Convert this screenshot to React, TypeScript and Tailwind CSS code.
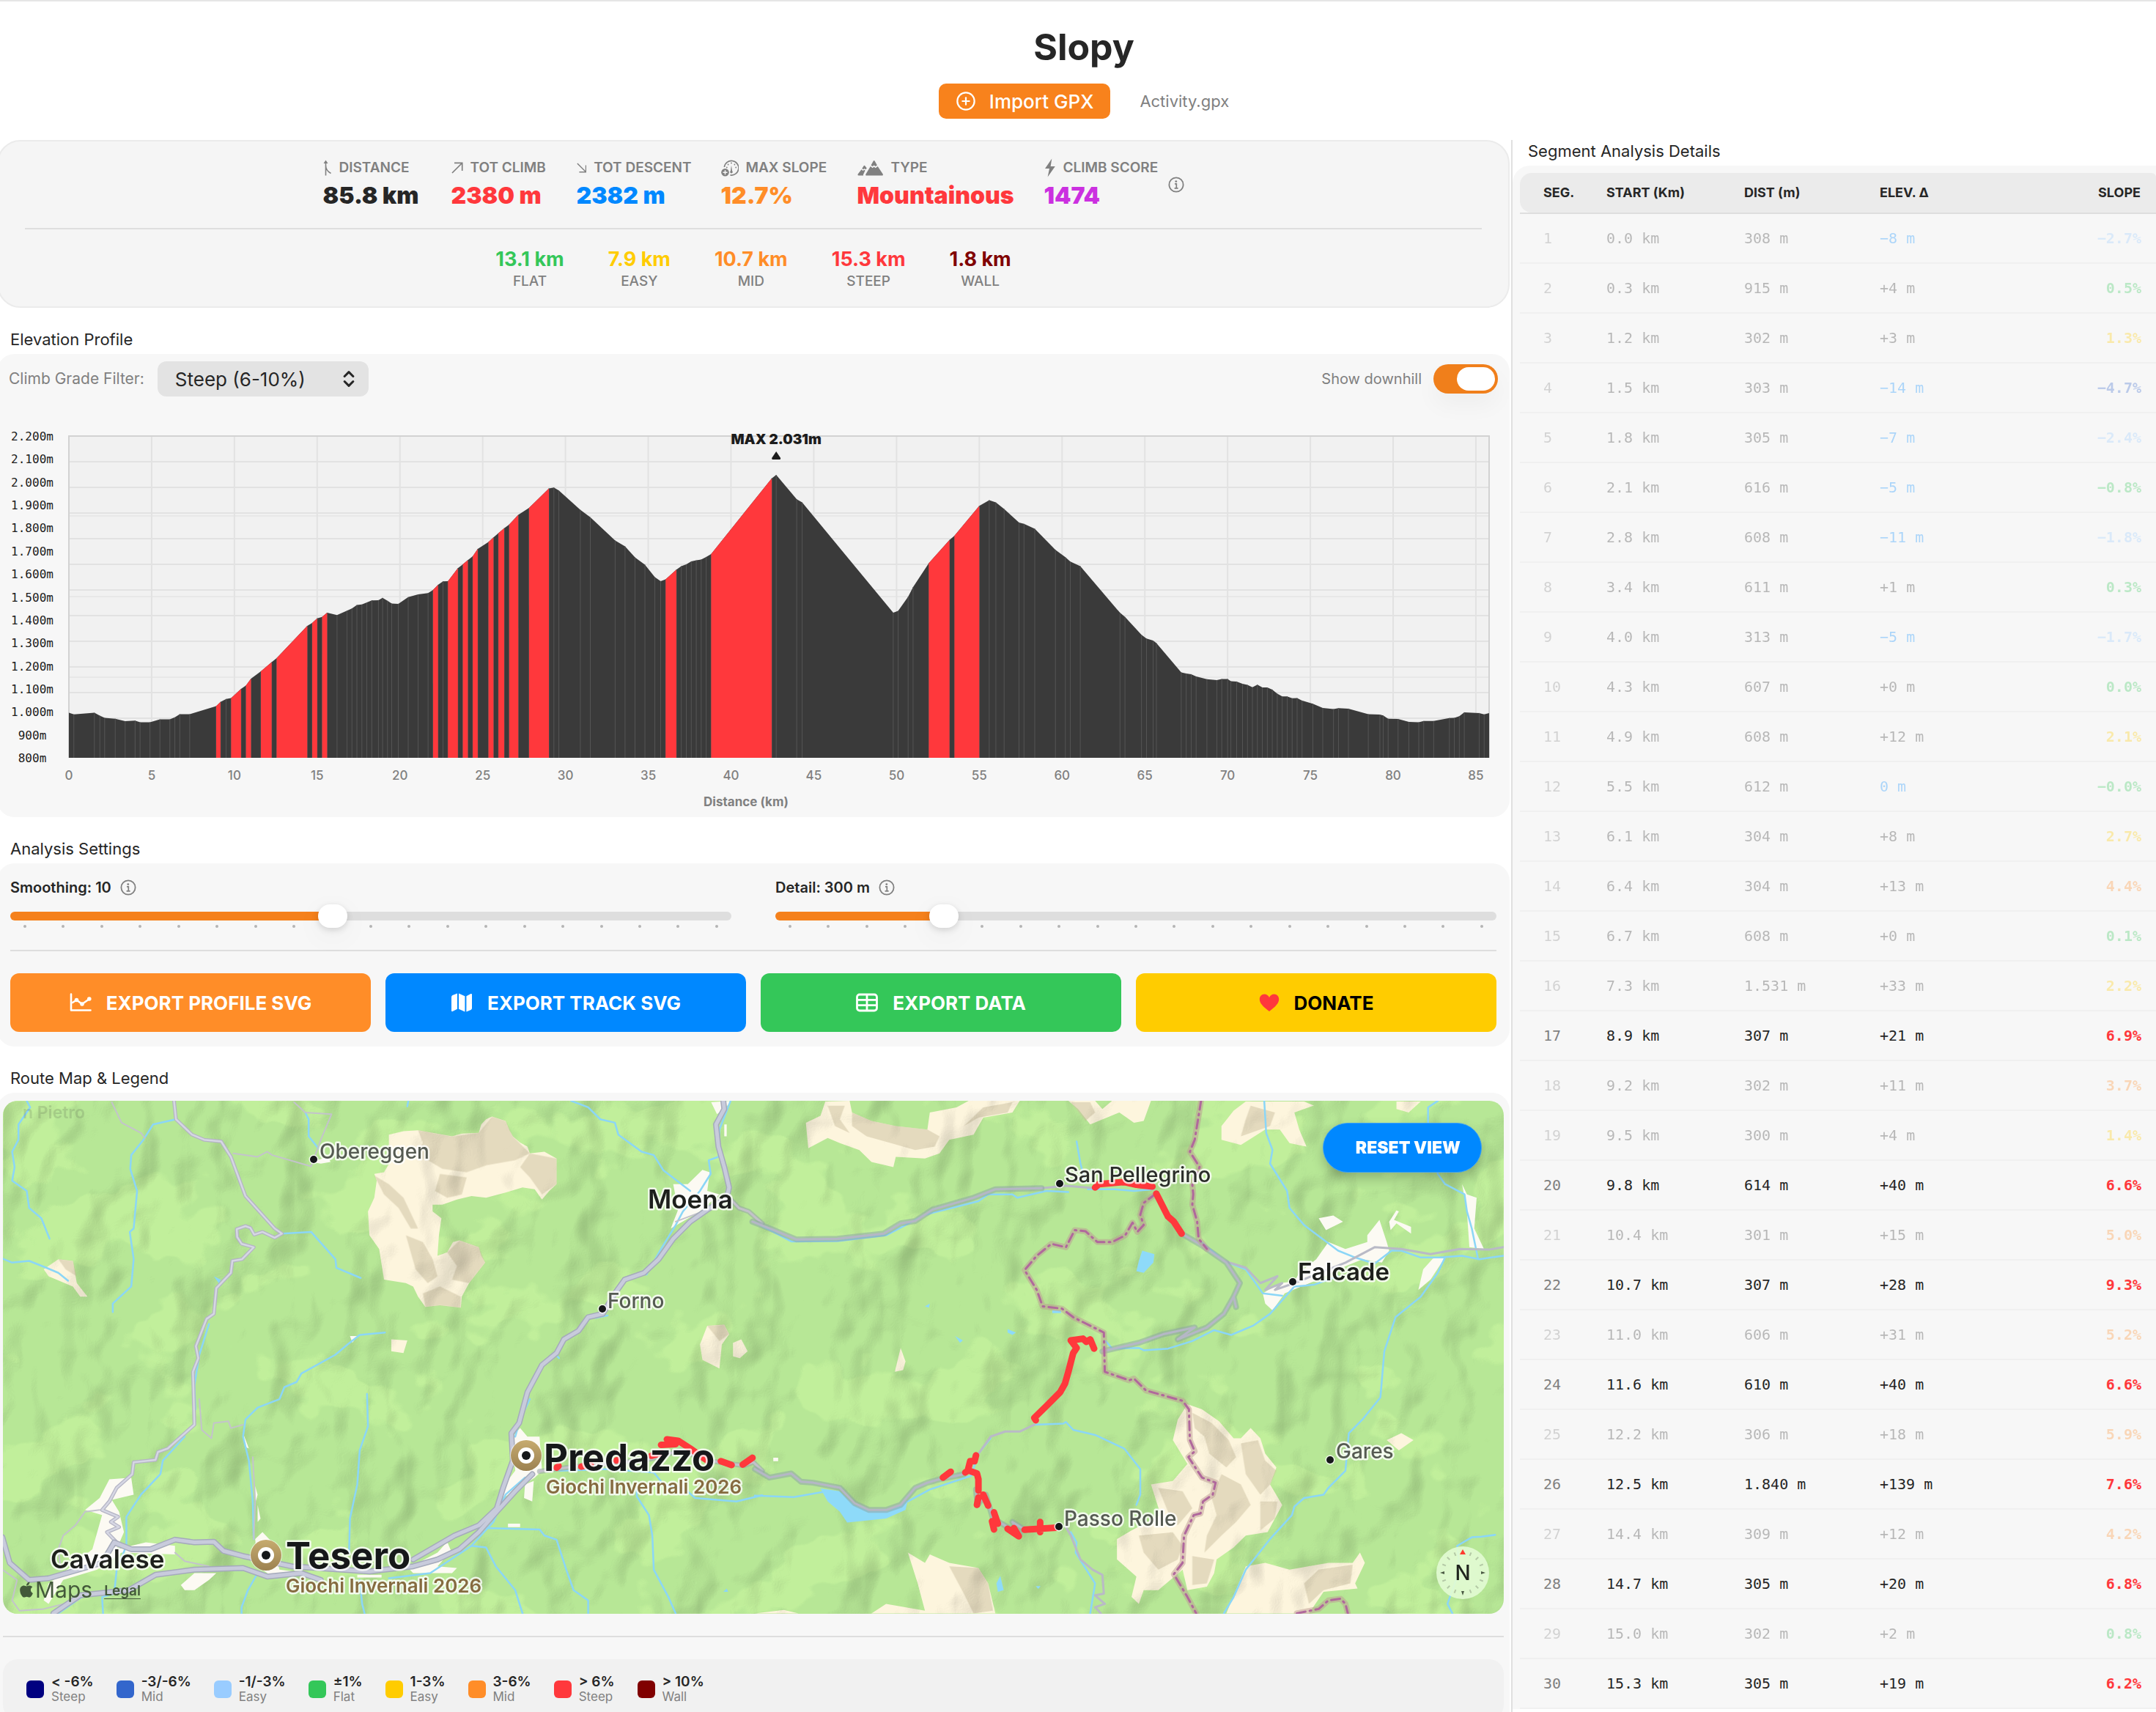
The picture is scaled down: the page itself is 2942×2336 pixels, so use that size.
import { useId, useState, type CSSProperties, type ReactNode } from "react";
import { ChevronsUpDown, CirclePlus } from "lucide-react";
import { FaApple } from "react-icons/fa";

const SANS = "font-[Inter,'Open_Sans',sans-serif]";

/* ---------- icons ---------- */

function InfoIcon() {
  return (
    <svg viewBox="0 0 22 22" className="size-[22px]" fill="none" stroke="currentColor" aria-hidden>
      <circle cx="11" cy="11" r="9.6" strokeWidth="1.8" />
      <circle cx="10.8" cy="6.6" r="1.4" fill="currentColor" stroke="none" />
      <path d="M9 9.8h2.3v6M8.6 15.8h5" strokeWidth="1.7" />
    </svg>
  );
}

function DistanceIcon() {
  return (
    <svg viewBox="0 0 12 22" className="h-[22px] w-3" fill="none" stroke="currentColor" strokeWidth="1.6" aria-hidden>
      <path d="M3.5 21.5V3M3.5 8c0 5 2.500 8 7 10.500" />
      <path d="M3.500 0.500 0.500 5h6z" fill="currentColor" stroke="none" />
    </svg>
  );
}

function UpRightIcon() {
  return (
    <svg viewBox="0 0 16 16" className="size-4" fill="none" stroke="currentColor" strokeWidth="1.7" aria-hidden>
      <path d="M1 15 14.500 1.500M4 1.300h10.700V12" />
    </svg>
  );
}

function DownRightIcon() {
  return (
    <svg viewBox="0 0 16 16" className="size-4" fill="none" stroke="currentColor" strokeWidth="1.7" aria-hidden>
      <path d="M1 1 14.500 14.500M4 14.700h10.700V4" />
    </svg>
  );
}

function GaugeIcon() {
  return (
    <svg viewBox="0 0 24 24" className="size-6" fill="none" stroke="currentColor" aria-hidden>
      <path d="M4.400 11A9.800 9.800 0 1 1 12.500 21.900" strokeWidth="1.700" />
      <path d="M14 8.500l1.300 9.500h-2.600z" fill="currentColor" stroke="none" />
      <circle cx="14" cy="17.700" r="1.700" fill="currentColor" stroke="none" />
      <path d="M14 5.500v.1M9.600 7.400v.1M18.400 7.400v.1M7.800 11.500v.1M20.200 11.500v.1" strokeWidth="1.800" strokeLinecap="round" />
      <circle cx="5.500" cy="18.300" r="5.300" fill="currentColor" stroke="none" />
      <path d="M5.500 15.300v6M2.500 18.300h6" stroke="#f5f5f5" strokeWidth="1.500" />
    </svg>
  );
}

function MountainsIcon() {
  return (
    <svg viewBox="0 0 36 22" className="h-[22px] w-9" fill="currentColor" aria-hidden>
      <path d="M18.500 7.500 21.700 1.700q1-1.500 2 0l3.200 5.800-2.200 1.600-2-1.500-2 1.500z" />
      <path d="M17.800 9l2.800 2.200 2-1.500 2.200 1.500L27.700 9l7 10.500q.8 2-1.200 2H12.500q-2 0-1-2z" />
      <path d="M6.300 12 8.500 8.500q1-1.400 2 0l2.300 3-1.600 1.700-1.700-1.200-1.500 1.200z" />
      <path d="M5.500 13.300l2 1.600 1.800-1.200 1.300.9-2.400 5.100q-.5 1 0 1.800H1.800q-2-.3-1.100-2z" />
    </svg>
  );
}

function BoltIcon() {
  return (
    <svg viewBox="0 0 16 26" className="h-[26px] w-4" fill="currentColor" aria-hidden>
      <path d="M10.300.6 1 14h6L4.600 25.400 14.800 11H8.600z" />
    </svg>
  );
}

function ChartIcon() {
  return (
    <svg viewBox="0 0 30 26" className="h-[26px] w-[30px]" fill="none" stroke="currentColor" strokeWidth="2.600" strokeLinecap="round" strokeLinejoin="round" aria-hidden>
      <path d="M2 1.500V23.500H28.500" />
      <path d="M4 13 9.500 9.500 17 15 27 8" />
      <circle cx="9.500" cy="9.500" r="1.500" fill="currentColor" />
      <circle cx="17" cy="15" r="1.500" fill="currentColor" />
      <circle cx="26.800" cy="8" r="1.500" fill="currentColor" />
    </svg>
  );
}

function FoldedMapIcon() {
  return (
    <svg viewBox="0 0 30 26" className="h-[26px] w-[30px]" fill="currentColor" aria-hidden>
      <path d="M1 5.500Q1 3.800 2.500 3L9 .6V21.800L2.600 25Q1 25.500 1 24z" />
      <path d="M11 .6 19.400 4.200V25.400L11 21.800z" />
      <path d="M21.400 4.200 27.400 1Q29 .5 29 2V20.500Q29 22.200 27.500 23L21.400 25.400z" />
    </svg>
  );
}

function TableIcon() {
  return (
    <svg viewBox="0 0 30 26" className="h-[26px] w-[30px]" fill="none" stroke="currentColor" strokeWidth="2.800" aria-hidden>
      <rect x="1.500" y="2" width="27" height="22" rx="3.500" />
      <path d="M1.500 9.300h27M1.500 16.600h27M15 2v22" />
    </svg>
  );
}

function HeartIcon() {
  return (
    <svg viewBox="0 0 28 24" className="h-6 w-7 text-[#ff383c]" fill="currentColor" aria-hidden>
      <path d="M14 24C5 17.500.8 12.500.8 7.600.8 3.600 3.600.6 7.300.6c2.900 0 5.300 1.600 6.700 4.300C15.400 2.200 17.800.6 20.700.6c3.700 0 6.500 3 6.500 7C27.200 12.500 23 17.500 14 24z" />
    </svg>
  );
}

/* ---------- summary ---------- */

const STATS = [
  { label: "DISTANCE", value: "85.8 km", icon: <DistanceIcon />, width: "w-[135px]", color: "text-[#262626]" },
  { label: "TOT CLIMB", value: "2380 m", icon: <UpRightIcon />, width: "w-[131px]", color: "text-[#ff383c]" },
  { label: "TOT DESCENT", value: "2382 m", icon: <DownRightIcon />, width: "w-[157px]", color: "text-[#0088ff]" },
  { label: "MAX SLOPE", value: "12.7%", icon: <GaugeIcon />, width: "w-[146px]", color: "text-[#ff8d28]" },
  { label: "TYPE", value: "Mountainous", icon: <MountainsIcon />, width: "w-[215px]", color: "text-[#ff383c]" },
  { label: "CLIMB SCORE", value: "1474", icon: <BoltIcon />, width: "w-[159px]", color: "text-[#cb30e0]" },
];

const GRADES = [
  { label: "FLAT", value: "13.1 km", color: "text-[#34c759]" },
  { label: "EASY", value: "7.9 km", color: "text-[#ffcc00]" },
  { label: "MID", value: "10.7 km", color: "text-[#ff8d28]" },
  { label: "STEEP", value: "15.3 km", color: "text-[#ff383c]" },
  { label: "WALL", value: "1.8 km", color: "text-[#800000]" },
];

function Summary() {
  return (
    <section className="rounded-[32px] border-2 border-[#ebebeb] bg-[#f5f5f5] px-9 py-6">
      <div className="flex items-center justify-center gap-[10px]">
        <div className="flex gap-10">
          {STATS.map((s) => (
            <div key={s.label} className={`${s.width} whitespace-nowrap`}>
              <div className="flex h-6 items-center gap-[10px] text-[19px] font-semibold text-[#808080]">
                {s.icon}
                {s.label}
              </div>
              <div className={`mt-[6px] text-[32px] leading-10 font-black ${s.color}`}>{s.value}</div>
            </div>
          ))}
        </div>
        <button type="button" aria-label="About the climb score" className="text-[#808080]">
          <InfoIcon />
        </button>
      </div>
      <div className="mt-6 h-[2px] bg-[#dedede]" />
      <div className="mt-[25px] flex justify-center gap-[60px]">
        {GRADES.map((g) => (
          <div key={g.label} className="text-center">
            <div className={`text-[27px] leading-8 font-bold ${g.color}`}>{g.value}</div>
            <div className="mt-1 text-[19px] leading-5 font-medium text-[#808080]">{g.label}</div>
          </div>
        ))}
      </div>
    </section>
  );
}

function SectionTitle({ children }: { children: ReactNode }) {
  return <h2 className="mt-[29px] mb-[6px] pl-[18px] text-[22px] leading-7 text-[#262626]">{children}</h2>;
}

/* ---------- elevation profile ---------- */

const PROFILE: [number, number][] = [
  [0, 996], [0.3, 989], [1.54, 996], [1.87, 983], [2.16, 974], [2.8, 970], [3.4, 959], [4, 962], [4.3, 955], [4.9, 955],
  [5.5, 967], [6.1, 967], [6.4, 976], [6.7, 990], [7.3, 990], [8.9, 1025], [9.16, 1043], [9.5, 1056], [9.8, 1060],
  [10.4, 1100], [10.7, 1115], [11, 1144], [11.6, 1176], [12.25, 1216], [12.55, 1234], [14.4, 1374], [14.7, 1387],
  [15, 1407], [15.3, 1413], [15.6, 1431], [16.2, 1421], [16.8, 1440], [17.1, 1450], [17.4, 1465], [17.7, 1467],
  [18, 1476], [18.3, 1485], [18.7, 1486], [18.95, 1496], [19.25, 1483], [19.5, 1471], [19.9, 1470], [20.5, 1499],
  [21.1, 1511], [21.7, 1517], [22, 1530], [22.3, 1553], [22.6, 1568], [22.9, 1569], [23.5, 1625], [23.8, 1642],
  [24.1, 1660], [24.4, 1677], [24.7, 1709], [25.35, 1739], [25.65, 1759], [25.95, 1777], [26.3, 1799], [26.6, 1815],
  [27.15, 1857], [27.8, 1887], [29, 1972], [29.3, 1976], [29.6, 1963], [30.9, 1879], [31.5, 1847], [33, 1746],
  [33.6, 1720], [34.2, 1672], [34.8, 1640], [35.4, 1586], [35.75, 1569], [36.05, 1577], [36.7, 1619], [37, 1634],
  [37.3, 1642], [37.6, 1655], [37.9, 1659], [38.2, 1663], [38.5, 1674], [38.8, 1687], [42.46, 2016], [42.73, 2031],
  [43.97, 1925], [44.3, 1911], [49.8, 1431], [50.1, 1439], [50.7, 1501], [51, 1543], [51.95, 1647], [53.2, 1748],
  [53.5, 1766], [55, 1896], [55.6, 1921], [56, 1911], [56.5, 1883], [57.4, 1824], [57.7, 1818], [58.35, 1797],
  [59.6, 1705], [60.2, 1673], [60.5, 1654], [61.1, 1634], [63.5, 1431], [63.8, 1413], [64.8, 1335], [65.1, 1319],
  [65.5, 1310], [65.7, 1299], [67.2, 1172], [67.5, 1167], [67.8, 1164], [68.1, 1154], [68.75, 1142], [69.35, 1138],
  [69.65, 1143], [70, 1143], [70.2, 1133], [70.55, 1132], [70.9, 1122], [71.2, 1117], [71.5, 1107], [71.8, 1118],
  [72.1, 1106], [72.4, 1106], [72.7, 1097], [73, 1079], [73.3, 1067], [73.6, 1067], [73.9, 1059], [74.2, 1060],
  [74.5, 1049], [75.15, 1035], [75.75, 1017], [76.4, 1012], [76.7, 1016], [77.3, 1014], [78.5, 990], [79.2, 988],
  [79.4, 984], [79.7, 970], [80.3, 969], [80.95, 956], [81.55, 955], [81.85, 960], [82.45, 960], [83.4, 973],
  [83.7, 974], [84, 981], [84.3, 998], [85.2, 995], [85.5, 989], [85.8, 995],
];

const STEEP: [number, number][] = [
  [8.9, 9.16], [9.8, 10.4], [10.7, 11], [11.6, 12.25], [12.55, 14.4], [14.7, 15], [15.3, 15.6], [22, 22.3],
  [22.9, 23.5], [23.8, 24.1], [24.4, 24.7], [25.35, 25.65], [25.95, 26.3], [26.6, 27.15], [27.8, 29], [36.05, 36.7],
  [38.8, 42.46], [51.95, 53.2], [53.5, 55],
];

const LEFT = 98;
const RIGHT = 2036;
const TOP = 54;
const BOTTOM = 493;
const kmX = (km: number) => LEFT + (km / 85.8) * (RIGHT - LEFT);
const elevY = (m: number) => BOTTOM - ((m - 800) / 1400) * (BOTTOM - TOP);

function area(points: [number, number][]) {
  const line = points.map(([km, m]) => `${kmX(km).toFixed(1)},${elevY(m).toFixed(1)}`).join(" ");
  return `${kmX(points[0][0])},${BOTTOM} ${line} ${kmX(points[points.length - 1][0])},${BOTTOM}`;
}

const thousands = (n: number) => (n >= 1000 ? `${Math.floor(n / 1000)}.${String(n % 1000).padStart(3, "0")}` : String(n));

function ElevationChart() {
  const elevations = Array.from({ length: 15 }, (_, i) => 2200 - i * 100);
  const distances = Array.from({ length: 18 }, (_, i) => i * 5);
  const peak = kmX(42.73);
  return (
    <svg viewBox="0 0 2064 574" className="block h-auto w-full" role="img" aria-label="Elevation profile">
      <rect x={LEFT} y={TOP} width={RIGHT - LEFT} height={BOTTOM - TOP} fill="#f1f1f1" />
      <g stroke="#dcdcdc" strokeWidth="1.500">
        {Array.from({ length: 12 }, (_, i) => (
          <path key={i} d={`M${LEFT} ${TOP + 35 * (i + 1)}H${RIGHT}`} />
        ))}
      </g>
      <g stroke="#e4e4e4" strokeWidth="1.500">
        {[163, 273, 383].map((y) => (
          <path key={y} d={`M${LEFT} ${y}H${RIGHT}`} />
        ))}
      </g>
      <g stroke="#e2e2e2" strokeWidth="2">
        {distances.map((km) => (
          <path key={km} d={`M${kmX(km)} ${TOP}V${BOTTOM}`} />
        ))}
      </g>
      <path d={`M${LEFT} ${BOTTOM}V${TOP}H${RIGHT}V${BOTTOM}`} fill="none" stroke="#d2d2d2" strokeWidth="2" />
      <polygon points={area(PROFILE)} fill="#3a3a3a" />
      {PROFILE.slice(1, -1).map(([km, m]) => (
        <path key={km} d={`M${kmX(km)} ${elevY(m)}V${BOTTOM}`} stroke="#555555" strokeWidth="1" />
      ))}
      {STEEP.map(([a, b]) => (
        <polygon key={a} points={area(PROFILE.filter(([km]) => km >= a && km <= b))} fill="#ff383c" />
      ))}
      <g className="font-['DejaVu_Sans_Mono',monospace] text-[16px]" fill="#1c1c1c" textAnchor="middle">
        {elevations.map((m, i) => (
          <text key={m} x="48" y={TOP + 6 + (i * (BOTTOM - TOP)) / 14}>
            {thousands(m)}m
          </text>
        ))}
      </g>
      <g className="text-[17px] font-medium" fill="#808080" textAnchor="middle">
        {distances.map((km) => (
          <text key={km} x={kmX(km)} y="523">
            {km}
          </text>
        ))}
        <text x="1022" y="559" className="font-bold">
          Distance (km)
        </text>
      </g>
      <text x={peak} y="65" textAnchor="middle" fill="#1c1c1c" className="text-[19px] font-black">
        MAX 2.031m
      </text>
      <path d={`M${peak} 75l6 9q0 2-1 2h-10q-1 0-1-2z`} fill="#1c1c1c" />
    </svg>
  );
}

function ElevationCard() {
  const [downhill, setDownhill] = useState(true);
  return (
    <section className="overflow-hidden rounded-[24px] bg-[#f7f7f7] pt-[10px]">
      <div className="flex h-12 items-center pr-4 pl-4 text-[#808080]">
        <label htmlFor="grade" className="mr-[18px] text-[21px]">
          Climb Grade Filter:
        </label>
        <div className="relative">
          <select
            id="grade"
            defaultValue="steep"
            className="h-12 w-[288px] appearance-none rounded-xl bg-[#e3e3e3] pl-6 text-[26px] text-[#262626]"
          >
            <option value="easy">Easy (1-3%)</option>
            <option value="mid">Mid (3-6%)</option>
            <option value="steep">Steep (6-10%)</option>
            <option value="wall">Wall (&gt;10%)</option>
          </select>
          <ChevronsUpDown className="pointer-events-none absolute top-[10px] right-[13px] size-7 text-[#262626]" strokeWidth={2.600} />
        </div>
        <label htmlFor="downhill" className="mr-4 ml-auto text-[20px]">
          Show downhill
        </label>
        <input
          id="downhill"
          type="checkbox"
          role="switch"
          checked={downhill}
          onChange={(e) => setDownhill(e.target.checked)}
          className="h-10 w-[88px] appearance-none rounded-full bg-[#d1d1d1] p-1 shadow-[0_16px_32px_rgba(0,0,0,0.04)] before:block before:h-8 before:w-[52px] before:rounded-full before:bg-white checked:bg-[#f07f1b] checked:before:ml-7"
        />
      </div>
      <ElevationChart />
    </section>
  );
}

/* ---------- settings ---------- */

function Slider(props: { name: string; unit: string; min: number; max: number; step: number; initial: number }) {
  const { name, unit, min, max, step, initial } = props;
  const id = useId();
  const [value, setValue] = useState(initial);
  const fill = { "--fill": `${((value - min) / (max - min)) * 100}%` } as CSSProperties;
  return (
    <div>
      <div className="flex h-6 items-center gap-3 text-[20px] font-semibold text-[#262626]">
        <label htmlFor={id}>
          {name}: {value}
          {unit}
        </label>
        <button type="button" aria-label={`About ${name}`} className="text-[#808080]">
          <InfoIcon />
        </button>
      </div>
      <input
        id={id}
        type="range"
        min={min}
        max={max}
        step={step}
        value={value}
        onChange={(e) => setValue(Number(e.target.value))}
        style={fill}
        className="relative z-10 mt-[11px] block h-8 w-full appearance-none bg-transparent [&::-webkit-slider-runnable-track]:h-3 [&::-webkit-slider-runnable-track]:rounded-md [&::-webkit-slider-runnable-track]:bg-[linear-gradient(to_right,#f5811c_var(--fill),#dedede_var(--fill))] [&::-webkit-slider-thumb]:-mt-[10px] [&::-webkit-slider-thumb]:h-8 [&::-webkit-slider-thumb]:w-10 [&::-webkit-slider-thumb]:appearance-none [&::-webkit-slider-thumb]:rounded-2xl [&::-webkit-slider-thumb]:bg-white [&::-webkit-slider-thumb]:shadow-[0_3px_10px_rgba(0,0,0,0.14),0_10px_40px_rgba(0,0,0,0.05)]"
      />
      <div className="-mt-1 flex justify-between px-[18px]">
        {Array.from({ length: 19 }, (_, i) => (
          <span key={i} className="size-1 rounded-full bg-[#b4b4b4]" />
        ))}
      </div>
    </div>
  );
}

function ActionButton({ color, icon, children }: { color: string; icon: ReactNode; children: ReactNode }) {
  return (
    <button type="button" className={`flex h-20 items-center justify-center gap-5 rounded-xl text-[26px] font-bold ${color}`}>
      {icon}
      {children}
    </button>
  );
}

function SettingsCard() {
  return (
    <section className="rounded-[24px] bg-[#f7f7f7] px-[18px] pt-[21px] pb-5">
      <div className="grid grid-cols-2 gap-[60px]">
        <Slider name="Smoothing" unit="" min={2} max={20} step={1} initial={10} />
        <Slider name="Detail" unit=" m" min={100} max={1000} step={50} initial={300} />
      </div>
      <div className="my-[30px] h-[2px] bg-[#dedede]" />
      <div className="grid grid-cols-4 gap-5">
        <ActionButton color="bg-[#ff8d28] text-white" icon={<ChartIcon />}>EXPORT PROFILE SVG</ActionButton>
        <ActionButton color="bg-[#0088ff] text-white" icon={<FoldedMapIcon />}>EXPORT TRACK SVG</ActionButton>
        <ActionButton color="bg-[#34c759] text-white" icon={<TableIcon />}>EXPORT DATA</ActionButton>
        <ActionButton color="bg-[#ffcc00] text-black" icon={<HeartIcon />}>DONATE</ActionButton>
      </div>
    </section>
  );
}

/* ---------- map ---------- */

const WEST = "matrix(.6633 0 0 .4656 -4 -12)";
const EAST = "matrix(.6633 0 0 .4656 1026 -12)";
const KEEP = "[&_path]:[vector-effect:non-scaling-stroke]";

const LAND = {
  rockWest:
    "M800,125L830,115 860,112 890,120 930,130 950,122 985,120 990,95 1000,80 1012,72 1040,85 1048,112 1055,130 1070,148 1085,160 1090,180 1120,175 1145,195 1145,270 1130,290 1115,315 1100,285 1075,280 1040,295 1000,310 970,305 940,315 910,330 890,330 890,350 908,370 903,420 900,480 920,470 932,440 945,435 985,455 990,480 998,500 965,560 950,600 948,632 905,625 875,630 860,600 850,570 835,560 790,550 780,460 760,420 757,350 770,310 775,260 770,240 790,235 805,200 800,170Z" +
    "M90,520L120,490 150,495 158,560 180,600 165,600 150,570 100,540Z" +
    "M1440,740L1455,685 1490,682 1500,710 1485,740 1480,810 1445,785ZM1508,735L1525,725 1538,760 1522,780 1508,775ZM805,725L838,728 830,765 805,760Z",
  rockEast:
    "M105,90L135,70 145,28 195,26 200,60 240,85 290,100 355,110 360,60 415,45 440,26 545,26 530,60 470,75 450,125 400,140 380,180 350,195 290,190 285,220 240,205 215,170 175,150 150,135 110,165Z" +
    "M645,26L700,26 715,50 735,26 815,26 800,85 780,90 750,60 690,95 665,50Z" +
    "M985,55L1010,28 1130,28 1150,40 1110,60 1120,110 1135,160 1100,150 1080,110 1050,110 1000,155 960,140 960,100ZM1320,28L1370,28 1345,60 1320,50Z" +
    "M870,960L890,915 920,930 955,965 985,1015 1000,1015 1020,985 1040,1015 1050,1060 1073,1100 1060,1150 1085,1210 1055,1290 1010,1300 985,1335 950,1370 945,1410 930,1450 890,1460 880,1400 830,1460 800,1460 790,1500 775,1480 785,1420 745,1370 745,1310 775,1285 835,1240 815,1150 860,1140 890,1090 860,1020Z" +
    "M970,1528L1010,1390 1050,1380 1100,1400 1180,1380 1230,1380 1245,1350 1255,1380 1235,1440 1240,1455 1170,1465 1140,1528Z" +
    "M315,1350L350,1380 360,1355 400,1380 460,1395 480,1440 495,1528 240,1528 270,1500 350,1520 335,1440Z" +
    "M0,1528L60,1518 90,1528ZM288,820L300,750 310,790 305,815ZM1300,1020L1330,1000 1355,1020 1325,1050Z",
  shadeWest:
    "M860,112L930,130 985,120 1012,72 1040,85 1055,130 1090,180 1060,200 1000,215 960,235 910,225 880,200 850,190 870,150ZM1090,180L1145,195 1145,270 1115,300 1090,250 1070,220ZM770,245L800,270 830,310 850,370 860,400 845,400 820,340 790,300ZM835,420L870,440 890,490 900,540 880,560 855,520ZM920,470L945,435 985,455 998,500 965,560 930,550 940,510ZM870,590L905,570 948,600 948,632 905,625 875,630ZM905,240L960,250 950,300 920,310 895,290ZM1455,685L1490,682 1500,710 1480,730ZM120,490L150,495 158,540 135,520Z",
  shadeEast:
    "M200,60L240,85 290,100 355,110 380,130 370,160 330,170 280,150 230,130 200,100ZM150,40L185,40 175,80 195,120 165,100ZM470,45L530,30 520,60 460,75 430,100ZM650,30L690,30 700,60 680,85ZM1020,40L1070,60 1060,100 1000,130 1010,80ZM900,940L940,970 975,1020 990,1070 970,1100 935,1060 925,1010 905,985ZM1000,1030L1035,1020 1050,1080 1073,1110 1060,1150 1040,1180 1010,1120ZM960,1120L1000,1150 1020,1210 990,1260 960,1300 925,1350 930,1300 950,1240 940,1190ZM830,1160L880,1170 900,1220 870,1270 850,1230ZM790,1300L860,1290 880,1330 870,1370 830,1400 800,1350ZM1040,1200L1075,1200 1070,1250 1040,1285ZM900,1360L945,1370 930,1440 900,1445ZM1160,1400L1230,1385 1225,1440 1170,1460 1140,1500 1130,1440ZM400,1390L460,1395 480,1440 490,1520 450,1528 430,1470Z",
  townWest:
    "M1385,270L1415,270 1445,228 1460,235 1455,290 1480,300 1440,350 1380,400 1395,345ZM1463,30L1505,26 1490,50 1475,65ZM1490,95h5v35h-5z" +
    "M1055,1010L1070,985 1085,1010 1110,1010 1115,1110 1100,1130 1035,1190 1038,1150 1060,1110ZM1080,1150L1098,1140 1095,1200 1078,1190ZM1045,1265h25v10h-25z" +
    "M225,1135L270,1130 275,1180 230,1195 245,1230 255,1290 240,1340 300,1320 360,1330 360,1355 250,1350 200,1400 130,1430 100,1500 90,1490 100,1440 120,1420 190,1340 210,1240 175,1225 205,1190Z" +
    "M372,1445L400,1410 445,1410 430,1430 400,1460 380,1460ZM525,1310L540,1290 560,1320 575,1400 620,1408 560,1420 530,1390ZM500,1000L512,1045 505,1040ZM525,1155L530,1180 525,1205ZM530,1210l6,40 -6,10z" +
    "M840,1395L900,1350 920,1318 928,1345 900,1390 940,1395 930,1410 850,1410ZM735,1415h50v8h-50zM640,205l35,-15 5,15 -20,5zM720,715l15,0 -10,20z",
  townEast:
    "M1045,590L1080,560 1110,555 1120,530 1155,490 1180,440 1215,460 1260,440 1260,420 1285,375 1300,440 1305,465 1290,500 1250,490 1200,520 1150,555 1090,590 1065,640 1050,620ZM1160,370L1190,362 1210,380 1175,405Z" +
    "M1305,380L1320,347 1325,350 1315,375 1350,395 1350,415 1320,385 1308,405ZM1455,270L1465,300 1485,310 1480,400 1500,460 1470,455 1465,350ZM1375,520L1395,488 1420,485 1390,550 1365,580ZM38,1072h10v10h-10z",
  lakes:
    "M135,1162L175,1170 205,1210 235,1228 275,1228 315,1195 310,1225 270,1250 190,1262 175,1230 150,1200ZM797,465L822,475 820,500 800,530 785,525 790,495ZM520,695L537,705 530,712 520,705ZM412,715L428,728 422,735ZM497,1440L505,1418 512,1460 500,1465ZM612,640h18v8h-18zM350,628l10,-8 -2,12zM578,1448l10,0 -5,8z",
  lakesWest: "M1488,1465L1495,1455 1498,1465ZM440,540l14,10 -3,12z",
};

const RIVERS_WEST =
  "M55,26L62,45 38,95 38,140 25,175 30,220 25,260 55,290 60,340 85,370 102,430M0,485L25,500 60,495 95,515 120,530 140,553M362,80L315,95 295,140 270,185 268,225 282,290 275,400 267,410 275,490 270,570 232,620 232,645" +
  "M1175,26L1210,45 1235,80 1265,90 1272,125 1320,175 1345,185 1365,230 1420,290M628,60L635,80 635,130 655,165M580,415L640,410 690,490 692,515 742,545" +
  "M792,705L740,712 715,740 690,770 620,825 610,850 585,865 575,900 530,925 505,960 500,1010 512,1080 520,1200 522,1310M755,885L757,980 740,1050 735,1150 720,1250 718,1350M840,26L838,42M430,680L410,770 400,860 402,930" +
  "M380,1010L335,1080 330,1120 290,1180 260,1245 260,1330 240,1400 235,1470 210,1480 212,1528M1503,26L1480,110 1478,190 1458,200 1462,240 1440,290 1405,350 1390,390 1360,460 1330,535M1250,655L1225,662M1150,780L1140,765M1090,900L1070,960 1060,1010" +
  "M1150,1110L1250,1105 1345,1115 1365,1150 1410,1165 1430,1190 1515,1200 1568,1182M1310,1165L1310,1185 1335,1240 1342,1300 1345,1400 1375,1480 1390,1528M1000,1278L1110,1282 1120,1300 1145,1312 1165,1400 1180,1460 1210,1490 1210,1528" +
  "M1080,1130L1040,1180 1015,1260 970,1330 885,1410 800,1425M970,1330L1000,1335 1020,1390 1060,1460 1075,1528M530,1410L510,1460 497,1510 497,1528M740,1430L745,1500 750,1528M120,1528L170,1478 270,1458 310,1418 400,1404 520,1400 570,1424";

const RIVERS_EAST =
  "M0,382L30,404 75,438 170,437 270,420 350,360 460,320 480,300 530,300 540,310 600,290 645,293M662,145L670,210 680,265M685,285L740,285 780,290 820,285M915,435L965,495 1010,520 1045,590 1085,597" +
  "M1048,26L1052,120 1065,170 1060,210 1095,290 1100,340 1130,390 1200,465 1235,485 1275,503 1310,465 1330,465 1370,485 1410,485 1455,480 1490,490 1540,480M1405,26L1385,45 1385,90 1405,240 1420,270 1460,300 1465,350 1475,400 1488,490" +
  "M1200,540L1150,565 1110,570 1060,650 1025,685 980,712 945,698 900,730 850,752 800,757 790,750 735,752 722,730M1420,485L1405,530 1370,600 1318,660 1295,760 1287,895 1250,960 1222,1000 1215,1110 1180,1160 1170,1180 1130,1190 1110,1215 1105,1240 1060,1310 1010,1400 985,1480 965,1528" +
  "M1523,1298L1495,1303 1475,1305 1445,1330 1450,1400 1425,1500 1435,1528M575,975L635,972 640,967 655,990 700,1005 760,1045 793,1105 793,1180 785,1210M485,1015L460,1060 445,1125 360,1165 315,1200M650,1290L662,1320 660,1350 700,1440 690,1528M0,1183L80,1187 140,1172";

const MAIN_WEST =
  "M1488,26L1490,50 1473,95 1478,160 1490,220 1500,280 1495,310 1455,345 1420,380 1385,430 1355,490 1325,530 1285,550 1265,590 1240,650 1210,660 1190,700 1160,725 1145,765 1115,800 1085,880 1068,970 1052,1000 1055,1080 1035,1160 1022,1220 985,1270 935,1300 850,1370" +
  "M1095,1120L1060,1170 1022,1230 985,1290 945,1340 900,1370 850,1390 760,1405 600,1390 500,1360 460,1345 440,1318 400,1320 360,1312 310,1340 270,1340 235,1320 210,1380 100,1425 60,1430 20,1380 5,1305M110,1528L165,1475 265,1460 320,1415 400,1400 500,1395 550,1420 620,1410 660,1430";

const MINOR_WEST =
  "M358,26L362,80 395,125 420,140 455,145 475,190 505,305 565,400 580,415 565,427 540,410 523,418 515,398 505,393 487,402 488,425 497,445 522,455 498,490 478,495 475,530 445,575 440,650 425,665 403,745 408,780 397,820 400,975 345,1045 325,1055 320,1078 275,1085 272,1120 240,1160 225,1200 210,1225 243,1245 228,1260 245,1275 220,1290 240,1320";

const THIN_WEST =
  "M230,30L250,90 290,120 298,135M605,30L628,60 682,65 660,140 640,218 560,185 550,175 530,190 480,180M410,900L415,990 435,1015 440,970 470,965 475,985 500,975M205,1225L175,1230 155,1270 130,1300 120,1340 125,1400M5,1400L35,1430 25,1490 40,1520 90,1515 160,1490M360,1350L380,1375 430,1390M520,1070L525,1200 522,1310M1455,345L1390,380";

const ROUTE_WEST = "M1110,1112L1180,1098 1250,1090 1340,1075 1400,1050 1455,1080 1530,1095 1550,1085 1568,1110M1500,310L1520,340 1540,350 1568,385";
const ROUTE_EAST =
  "M-5,380L40,405 85,432 170,430 265,415 300,385 330,378 365,345 450,310 495,285 590,282M878,415L920,450 970,500 998,560 985,600 990,630M985,600L965,650 930,690 870,725 905,690 840,710 790,735 715,760M0,1105L30,1130 75,1118 95,1142 120,1145 175,1160 205,1205 235,1225 270,1225 300,1210 330,1160 355,1145 380,1135 430,1120M455,1165L458,1210 475,1180 490,1250 520,1275 545,1295 530,1260 555,1283 590,1280";
const THIN_EAST =
  "M590,282L640,275 700,282M965,495L1010,515 1040,560 1075,540 1050,580 1085,560 1070,580 1110,560M1110,560L1215,500 1275,455 1330,460 1390,475 1450,460 1510,462 1540,455M640,1275L650,1300 670,1370 695,1400 715,1415 718,1470 700,1475 720,1500 700,1510 712,1528M460,1060L485,1010 515,995 545,995 575,975";
const BORDER =
  "M918,26L905,140 895,175 915,220 900,270 902,300 900,330 910,380 913,430 930,460M825,298L800,325 793,360 800,390 787,410 777,383 762,420 735,440 705,440 680,408 658,405 640,455 610,445 580,480 555,522 580,580 592,628 632,635 655,660 718,705 720,820 770,845 780,840 805,875 880,905 893,930 895,1020 905,1053 892,1070 920,1130 948,1145 942,1180 922,1200 917,1235 903,1240 883,1300 880,1380 862,1413 890,1480 908,1528M1115,1528L1160,1515 1180,1490 1205,1485 1215,1500 1220,1528";
const STEEP_WEST = "M1145,1101L1149,1096M1196,1098L1215,1092M1268,1080L1278,1076M1340,1066L1362,1058M1360,1034L1390,1032 1372,1018 1395,1022 1420,1045 1455,1080M1483,1082L1505,1093M1528,1092L1548,1072";
const STEEP_EAST =
  "M700,280L708,270 760,264 785,272 818,277M826,298L850,365 862,380 878,415M698,752L690,725 682,732 675,723 650,728 662,750 655,765 645,820 638,855 628,880 600,920 575,955 578,962M387,1130L403,1113M455,1065L452,1082 443,1082 438,1110 433,1115M445,1112L457,1118 460,1135 460,1168M457,1210L460,1188M470,1180L480,1212M492,1232L500,1265 488,1258 492,1282M520,1280L543,1302 533,1278M555,1283L620,1277M587,1260V1290";

const PLACES = [
  { name: "Obereggen", x: 432, y: 79, dot: [424, 80], style: "text-[28px] font-medium", fill: "#555a52" },
  { name: "Moena", x: 880, y: 147, style: "text-[35px] font-semibold", fill: "#1d1f1c" },
  { name: "Forno", x: 825, y: 283, dot: [818, 284], style: "text-[28px] font-medium", fill: "#555a52" },
  { name: "Predazzo", x: 738, y: 505, style: "text-[51px] font-bold", fill: "#16181a" },
  { name: "Tesero", x: 386, y: 639, style: "text-[51px] font-bold", fill: "#16181a" },
  { name: "Cavalese", x: 65, y: 638, style: "text-[35px] font-semibold", fill: "#1d1f1c" },
  { name: "San Pellegrino", x: 1449, y: 111, dot: [1442, 113], style: "text-[29px] font-medium", fill: "#2b2d2a" },
  { name: "Falcade", x: 1767, y: 245, dot: [1760, 247], style: "text-[33px] font-semibold", fill: "#1d1f1c" },
  { name: "Gares", x: 1819, y: 488, dot: [1811, 490], style: "text-[28px] font-medium", fill: "#555a52" },
  { name: "Passo Rolle", x: 1448, y: 580, dot: [1441, 581], style: "text-[28px] font-medium", fill: "#555a52" },
];

function Venue({ x, y }: { x: number; y: number }) {
  return (
    <g>
      <circle cx={x} cy={y} r="22" fill="#fff" opacity=".6" />
      <circle cx={x} cy={y} r="21" fill="url(#gold)" />
      <circle cx={x} cy={y} r="11" fill="#fff" />
      <circle cx={x} cy={y} r="6" fill="#16181a" />
    </g>
  );
}

function MapDrawing() {
  return (
    <svg viewBox="0 0 2048 700" className="block h-auto w-full" role="img" aria-label="Route map">
      <defs>
        <linearGradient id="gold" x1="0" y1="0" x2="0" y2="1">
          <stop offset="0" stopColor="#c6ab6f" />
          <stop offset="1" stopColor="#9c8150" />
        </linearGradient>
        <filter id="meadow" x="0" y="0" width="100%" height="100%" colorInterpolationFilters="sRGB">
          <feTurbulence type="fractalNoise" baseFrequency="0.007 0.009" numOctaves="4" seed="11" />
          <feColorMatrix values="0 0 0 0 .77  0 0 0 0 .95  0 0 0 0 .615  24 0 0 0 -13.600" />
        </filter>
        <filter id="relief" x="0" y="0" width="100%" height="100%" colorInterpolationFilters="sRGB">
          <feTurbulence type="fractalNoise" baseFrequency="0.010 0.008" numOctaves="3" seed="4" />
          <feDiffuseLighting surfaceScale="32" diffuseConstant="1.250" lightingColor="#ffffff">
            <feDistantLight azimuth="215" elevation="56" />
          </feDiffuseLighting>
        </filter>
      </defs>
      <rect width="2048" height="700" fill="#b7e796" />
      <rect width="2048" height="700" filter="url(#meadow)" opacity=".8" />
      <g fill="#fdf5dd">
        <path transform={WEST} d={LAND.rockWest} />
        <path transform={EAST} d={LAND.rockEast} />
      </g>
      <g fill="#cbbf9f" opacity=".5">
        <path transform={WEST} d={LAND.shadeWest} />
        <path transform={EAST} d={LAND.shadeEast} />
      </g>
      <rect width="2048" height="700" filter="url(#relief)" opacity=".2" className="mix-blend-multiply" />
      <g fill="#fcfaf3">
        <path transform={WEST} d={LAND.townWest} />
        <path transform={EAST} d={LAND.townEast} />
      </g>
      <g transform={WEST} fill="none" strokeLinejoin="round" strokeLinecap="round" className={KEEP}>
        <path d={RIVERS_WEST} stroke="#8bd6f7" strokeWidth="2.500" />
        <path d={LAND.lakesWest} fill="#8bd6f7" />
        <path d={THIN_WEST} stroke="#c3c3cb" strokeWidth="2" />
        <path d={MINOR_WEST} stroke="#b4b4c4" strokeWidth="5" />
        <path d={MINOR_WEST} stroke="#d6d7e4" strokeWidth="2.500" />
        <path d={ROUTE_WEST} stroke="#9aa9a8" strokeWidth="7" opacity=".6" />
        <path d={ROUTE_WEST} stroke="#c3c1cb" strokeWidth="3" />
        <path d={MAIN_WEST} stroke="#a5aabb" strokeWidth="8" />
        <path d={MAIN_WEST} stroke="#c8cbdc" strokeWidth="5" />
      </g>
      <g transform={EAST} fill="none" strokeLinejoin="round" strokeLinecap="round" className={KEEP}>
        <path d={RIVERS_EAST} stroke="#8bd6f7" strokeWidth="2.500" />
        <path d={LAND.lakes} fill="#8edaf9" />
        <path d={THIN_EAST} stroke="#b9bac6" strokeWidth="3" />
        <path d={ROUTE_EAST} stroke="#8ea6a6" strokeWidth="8" opacity=".55" />
        <path d={ROUTE_EAST} stroke="#b5b7c6" strokeWidth="3" />
        <path d={BORDER} stroke="#bd9a94" strokeWidth="8" opacity=".5" />
        <path d={BORDER} stroke="#b0689c" strokeWidth="3" strokeDasharray="12 6 2 6" />
      </g>
      <g fill="none" stroke="#ff383c" strokeLinejoin="round" strokeLinecap="round" className={KEEP}>
        <path transform={WEST} d={STEEP_WEST} strokeWidth="9" />
        <path transform={EAST} d={STEEP_EAST} strokeWidth="9" />
      </g>
      <Venue x={714} y={484} />
      <Venue x={359} y={620} />
      <g stroke="#fff" strokeOpacity=".8" strokeWidth="5" strokeLinejoin="round" className="[paint-order:stroke]">
        {PLACES.map((p) => (
          <g key={p.name} fill={p.fill}>
            {p.dot && <circle cx={p.dot[0]} cy={p.dot[1]} r="5" fill="#16181a" strokeWidth="3" />}
            <text x={p.x} y={p.y} className={p.style}>
              {p.name}
            </text>
          </g>
        ))}
        <g fill="#866b40" className="text-[26px] font-semibold">
          <text x="741" y="536">Giochi Invernali 2026</text>
          <text x="386" y="671">Giochi Invernali 2026</text>
        </g>
      </g>
      <text x="112" y="24" textAnchor="end" fill="#55604c" opacity=".2" className="text-[23px] font-semibold">
        n Pietro
      </text>
    </svg>
  );
}

function Compass() {
  return (
    <svg viewBox="0 0 72 72" className="size-[72px]" aria-hidden>
      <circle cx="36" cy="36" r="36" fill="#e2fbd2" opacity=".92" />
      {Array.from({ length: 16 }, (_, i) => (
        <path
          key={i}
          d={i % 4 === 0 ? "M36 5l2 6h-4z" : "M36 6v5"}
          transform={`rotate(${i * 22.5} 36 36)`}
          fill={i === 0 ? "none" : "#4b5a44"}
          stroke={i % 4 === 0 ? "none" : "#b4c9a6"}
          strokeWidth="2"
        />
      ))}
      <path d="M36 4l4 7h-8z" fill="#ff3b30" />
      <text x="36" y="46" textAnchor="middle" fill="#1f241d" className="text-[28px] font-medium">
        N
      </text>
    </svg>
  );
}

const LEGEND = [
  { range: "< -6%", name: "Steep", color: "bg-[#000080]" },
  { range: "-3/-6%", name: "Mid", color: "bg-[#3366cc]" },
  { range: "-1/-3%", name: "Easy", color: "bg-[#99ccff]" },
  { range: "±1%", name: "Flat", color: "bg-[#34c759]" },
  { range: "1-3%", name: "Easy", color: "bg-[#ffcc00]" },
  { range: "3-6%", name: "Mid", color: "bg-[#ff8d28]" },
  { range: "> 6%", name: "Steep", color: "bg-[#ff383c]" },
  { range: "> 10%", name: "Wall", color: "bg-[#800000]" },
];

function MapCard() {
  return (
    <section className="rounded-t-[24px] bg-[#f7f7f7] px-2 pt-[11px] pb-5">
      <div className="relative overflow-hidden rounded-[20px]">
        <MapDrawing />
        <button
          type="button"
          className="absolute top-[30px] right-[30px] h-[68px] rounded-full border border-[#3da0f5] bg-[#0088ff] pr-7 pl-11 text-[23px] font-black text-white shadow-[0_8px_16px_rgba(0,0,0,0.22)]"
        >
          RESET VIEW
        </button>
        <div className="absolute right-5 bottom-5">
          <Compass />
        </div>
        <div className="absolute bottom-[15px] left-5 flex items-center text-[#43593a]">
          <FaApple className="size-6" />
          <span className="text-[30px] leading-9">Maps</span>
          <a href="#legal" className="mt-1 ml-4 text-[19px] font-semibold underline underline-offset-4">
            Legal
          </a>
        </div>
      </div>
      <div className="my-[30px] h-[2px] bg-[#dedede]" />
      <ul className="flex gap-[31px] rounded-[20px] bg-[#f1f1f1] px-8 py-[21px]">
        {LEGEND.map((l) => (
          <li key={l.range} className="flex items-center gap-[10px]">
            <span className={`size-6 rounded-md ${l.color}`} />
            <span>
              <span className="block text-[19px] leading-5 font-semibold text-[#262626]">{l.range}</span>
              <span className="block text-[17px] leading-5 text-[#808080]">{l.name}</span>
            </span>
          </li>
        ))}
      </ul>
    </section>
  );
}

/* ---------- segment table ---------- */

const SEGMENTS: [string, string, number, number][] = [
  ["0.0", "308", -8, -2.7], ["0.3", "915", 4, 0.5], ["1.2", "302", 3, 1.3], ["1.5", "303", -14, -4.7],
  ["1.8", "305", -7, -2.4], ["2.1", "616", -5, -0.8], ["2.8", "608", -11, -1.8], ["3.4", "611", 1, 0.3],
  ["4.0", "313", -5, -1.7], ["4.3", "607", 0, 0.0], ["4.9", "608", 12, 2.1], ["5.5", "612", -0, -0.0],
  ["6.1", "304", 8, 2.7], ["6.4", "304", 13, 4.4], ["6.7", "608", 0, 0.1], ["7.3", "1.531", 33, 2.2],
  ["8.9", "307", 21, 6.9], ["9.2", "302", 11, 3.7], ["9.5", "300", 4, 1.4], ["9.8", "614", 40, 6.6],
  ["10.4", "301", 15, 5.0], ["10.7", "307", 28, 9.3], ["11.0", "606", 31, 5.2], ["11.6", "610", 40, 6.6],
  ["12.2", "306", 18, 5.9], ["12.5", "1.840", 139, 7.6], ["14.4", "309", 12, 4.2], ["14.7", "305", 20, 6.8],
  ["15.0", "302", 2, 0.8], ["15.3", "305", 19, 6.2],
];

const isNegative = (n: number) => n < 0 || Object.is(n, -0);

function slopeColor(s: number) {
  if (s <= -6) return "text-[#000080]";
  if (s <= -3) return "text-[#3366cc]";
  if (s <= -1) return "text-[#99ccff]";
  if (s < 1) return "text-[#34c759]";
  if (s < 3) return "text-[#ffcc00]";
  if (s < 6) return "text-[#ff8d28]";
  return "text-[#ff383c]";
}

function elevationText(n: number) {
  if (Object.is(n, -0)) return "0";
  return n < 0 ? `−${-n}` : `+${n}`;
}

function SegmentTable() {
  return (
    <div className="rounded-tl-[24px] bg-[#f7f7f7] pt-[10px] pl-[10px]">
      <table className="w-full table-fixed border-separate border-spacing-0 text-left">
        <colgroup>
          <col className="w-[118px]" />
          <col className="w-[188px]" />
          <col className="w-[185px]" />
          <col />
          <col className="w-[180px]" />
        </colgroup>
        <thead className="text-[18px] leading-[54px] text-[#262626] [&_th]:bg-[#ebebeb] [&_th]:p-0 [&_th]:font-bold">
          <tr>
            <th className="rounded-l-2xl">
              <span className="pl-8">SEG.</span>
            </th>
            <th>START (Km)</th>
            <th>DIST (m)</th>
            <th>ELEV. Δ</th>
            <th className="rounded-tr-md text-right">
              <span className="pr-[21px]">SLOPE</span>
            </th>
          </tr>
        </thead>
        <tbody className="font-['DejaVu_Sans_Mono',monospace] text-[20px] leading-[26px] text-[#262626] [&_td]:border-b-2 [&_td]:border-[#f0f0f0] [&_td]:py-5 [&_tr:first-child_td]:border-t-2 [&_tr:first-child_td]:border-t-[#dedede]">
          {SEGMENTS.map(([start, dist, elev, slope], i) => {
            const dim = slope < 6 ? "opacity-30" : "";
            return (
              <tr key={start}>
                <td className="pl-8">
                  <span className={`text-[#808080] ${dim}`}>{i + 1}</span>
                </td>
                <td>
                  <span className={dim}>{start} km</span>
                </td>
                <td>
                  <span className={dim}>{dist} m</span>
                </td>
                <td>
                  <span className={`${dim} ${isNegative(elev) ? "text-[#0088ff]" : ""}`}>{elevationText(elev)} m</span>
                </td>
                <td className="pr-5 text-right font-bold">
                  <span className={`${dim} ${slopeColor(slope)}`}>
                    {isNegative(slope) ? "−" : ""}
                    {Math.abs(slope).toFixed(1)}%
                  </span>
                </td>
              </tr>
            );
          })}
        </tbody>
      </table>
    </div>
  );
}

export default function App() {
  return (
    <div className={`flex h-screen flex-col overflow-hidden border-t-2 border-[#e5e5e5] bg-white ${SANS}`}>
      <header className="flex flex-col items-center pt-8 pb-[29px] pl-4">
        <h1 className="text-[50px] leading-[60px] font-bold text-[#262626]">Slopy</h1>
        <div className="mt-5 flex items-center gap-10">
          <button type="button" className="flex h-12 items-center gap-[18px] rounded-[10px] bg-[#f8821c] px-[23px] text-[26px] font-medium text-white">
            <CirclePlus className="size-7" strokeWidth={1.900} />
            Import GPX
          </button>
          <span className="text-[22px] text-[#808080]">Activity.gpx</span>
        </div>
      </header>
      <div className="-ml-1 grid min-h-0 flex-1 grid-cols-[2064fr_882fr]">
        <main className="min-w-0">
          <Summary />
          <SectionTitle>Elevation Profile</SectionTitle>
          <ElevationCard />
          <SectionTitle>Analysis Settings</SectionTitle>
          <SettingsCard />
          <SectionTitle>Route Map &amp; Legend</SectionTitle>
          <MapCard />
        </main>
        <aside className="ml-[2px] min-w-0 border-l-2 border-[#e0e0e0] pt-px">
          <h2 className="mb-[6px] pl-[21px] text-[22px] leading-7 text-[#262626]">Segment Analysis Details</h2>
          <SegmentTable />
        </aside>
      </div>
    </div>
  );
}
